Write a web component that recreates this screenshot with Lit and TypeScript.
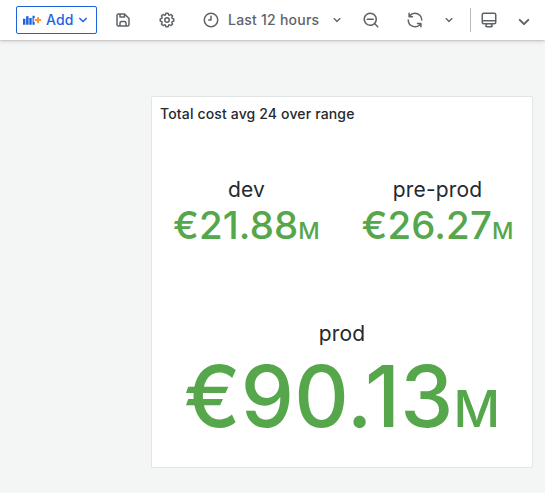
import { LitElement, html, css, svg } from "lit";
import { customElement, property } from "lit/decorators.js";

const ICONS: Record<string, string> = {
  save: "M20.71,9.29l-6-6a1,1,0,0,0-.32-.21A1.09,1.09,0,0,0,14,3H6A3,3,0,0,0,3,6V18a3,3,0,0,0,3,3H18a3,3,0,0,0,3-3V10A1,1,0,0,0,20.71,9.29ZM9,5h4V7H9Zm6,14H9V16a1,1,0,0,1,1-1h4a1,1,0,0,1,1,1Zm4-1a1,1,0,0,1-1,1H17V16a3,3,0,0,0-3-3H10a3,3,0,0,0-3,3v3H6a1,1,0,0,1-1-1V6A1,1,0,0,1,6,5H7V8A1,1,0,0,0,8,9h6a1,1,0,0,0,1-1V6.41l4,4Z",
  cog: "M21.32,9.55l-1.89-.63.89-1.78A1,1,0,0,0,20.13,6L18,3.87a1,1,0,0,0-1.15-.19l-1.78.89-.63-1.89A1,1,0,0,0,13.5,2h-3a1,1,0,0,0-.95.68L8.92,4.57,7.14,3.68A1,1,0,0,0,6,3.87L3.87,6a1,1,0,0,0-.19,1.15l.89,1.78-1.89.63A1,1,0,0,0,2,10.5v3a1,1,0,0,0,.68.95l1.89.63-.89,1.78A1,1,0,0,0,3.87,18L6,20.13a1,1,0,0,0,1.15.19l1.78-.89.63,1.89a1,1,0,0,0,.95.68h3a1,1,0,0,0,.95-.68l.63-1.89,1.78.89A1,1,0,0,0,18,20.13L20.13,18a1,1,0,0,0,.19-1.15l-.89-1.78,1.89-.63A1,1,0,0,0,22,13.5v-3A1,1,0,0,0,21.32,9.55ZM20,12.78l-1.2.4A2,2,0,0,0,17.64,16l.57,1.14-1.1,1.1L16,17.64a2,2,0,0,0-2.79,1.16l-.4,1.2H11.22l-.4-1.2A2,2,0,0,0,8,17.64l-1.14.57-1.1-1.1L6.36,16A2,2,0,0,0,5.2,13.18L4,12.78V11.22l1.2-.4A2,2,0,0,0,6.36,8L5.79,6.89l1.1-1.1L8,6.36A2,2,0,0,0,10.82,5.2l.4-1.2h1.56l.4,1.2A2,2,0,0,0,16,6.36l1.14-.57,1.1,1.1L17.64,8a2,2,0,0,0,1.16,2.79l1.2.4ZM12,8a4,4,0,1,0,4,4A4,4,0,0,0,12,8Zm0,6a2,2,0,1,1,2-2A2,2,0,0,1,12,14Z",
  clock: "M12,2A10,10,0,1,0,22,12,10,10,0,0,0,12,2Zm0,18a8,8,0,1,1,8-8A8,8,0,0,1,12,20ZM12,6a1,1,0,0,0-1,1v4H9a1,1,0,0,0,0,2h3a1,1,0,0,0,1-1V7A1,1,0,0,0,12,6Z",
  down: "M17,9.17a1,1,0,0,0-1.41,0L12,12.71,8.46,9.17a1,1,0,0,0-1.41,0,1,1,0,0,0,0,1.42l4.24,4.24a1,1,0,0,0,1.42,0L17,10.59A1,1,0,0,0,17,9.17Z",
  zoomOut: "M21.71,20.29,18,16.61A9,9,0,1,0,16.61,18l3.68,3.68a1,1,0,0,0,1.42,0A1,1,0,0,0,21.71,20.29ZM11,18a7,7,0,1,1,7-7A7,7,0,0,1,11,18Zm4-8H7a1,1,0,0,0,0,2h8a1,1,0,0,0,0-2Z",
  sync: "M19.91,15.51H15.38a1,1,0,0,0,0,2h2.4A8,8,0,0,1,4,12a1,1,0,1,0-2,0,10,10,0,0,0,16.88,7.23V21a1,1,0,0,0,2,0V16.5A1,1,0,0,0,19.91,15.51ZM12,2A10,10,0,0,0,5.12,4.77V3a1,1,0,0,0-2,0V7.5a1,1,0,0,0,1,1h4.5a1,1,0,0,0,0-2H6.22A8,8,0,0,1,20,12a1,1,0,0,0,2,0A10,10,0,0,0,12,2Z",
  monitor: "M19,2H5A3,3,0,0,0,2,5V15a3,3,0,0,0,3,3H7.64l-.58,1a2,2,0,0,0,0,2,2,2,0,0,0,1.75,1h6.46A2,2,0,0,0,17,21a2,2,0,0,0,0-2l-.59-1H19a3,3,0,0,0,3-3V5A3,3,0,0,0,19,2ZM8.77,20,10,18H14l1.2,2ZM20,15a1,1,0,0,1-1,1H5a1,1,0,0,1-1-1V14H20Zm0-3H4V5A1,1,0,0,1,5,4H19a1,1,0,0,1,1,1Z",
};

@customElement("ui-icon")
class UiIcon extends LitElement {
  @property() name = "";
  static styles = css`
    :host { display: block; flex: none; width: 18px; height: 18px; }
    svg { display: block; width: 100%; height: 100%; fill: currentColor; }
  `;
  render() {
    return html`<svg viewBox="0 0 24 24">${svg`<path d=${ICONS[this.name]}></path>`}</svg>`;
  }
}

@customElement("stat-value")
class StatValue extends LitElement {
  @property() label = "";
  @property() value = "";
  @property() unit = "";
  @property({ type: Boolean, reflect: true }) large = false;
  static styles = css`
    :host { display: flex; flex-direction: column; align-items: center; white-space: nowrap; }
    .label { font-size: 21px; line-height: 25px; color: #24292e; }
    .value { font-size: 38.4px; line-height: 46px; font-weight: 500; color: #56a64b; }
    .unit { font-size: 23.5px; }
    :host([large]) .value { font-size: 84.6px; line-height: 101px; }
    :host([large]) .unit { font-size: 51px; }
  `;
  render() {
    return html`<div class="label">${this.label}</div>
      <div class="value"><span>${this.value}</span><span class="unit">${this.unit}</span></div>`;
  }
}

@customElement("app-root")
class AppRoot extends LitElement {
  static styles = css`
    :host {
      display: flex; flex-direction: column; height: 493px; overflow: hidden;
      background: #f4f5f5; color: #24292e;
      font: 14px/22px Inter, "Liberation Sans", sans-serif; letter-spacing: 0.15px;
    }
    .bar {
      display: flex; align-items: center; height: 40px; flex: none; box-sizing: border-box;
      padding-left: 16px; background: #fff; color: #5f6368;
      box-shadow: 0 0.6px 1.5px rgba(0,0,0,.2), 0 1px 4px rgba(0,0,0,.18); font-weight: 500;
    }
    .add {
      display: flex; align-items: center; box-sizing: border-box; width: 81px; height: 28px;
      border: 1px solid #1f62e0; border-radius: 2px; padding-left: 6px; color: #1f62e0;
    }
    .add-glyph { width: 18px; height: 18px; margin-right: 5px; flex: none; }
    .save { margin-left: 17px; }
    .cog { margin-left: 26px; }
    .clock { margin-left: 26px; }
    .range { margin-left: 8px; width: 101px; white-space: nowrap; letter-spacing: 0.23px; }
    .small { width: 16px; height: 16px; }
    .zoom { margin-left: 17px; }
    .sync { margin-left: 26px; }
    .interval { margin-left: 17px; }
    .sep { width: 1px; height: 24px; background: #b9babc; margin-left: 13px; margin-right: 9px; }
    .big { width: 24px; height: 24px; margin: 3px 0 0 14px; }
    .panel {
      display: flex; flex-direction: column; box-sizing: border-box;
      width: 382px; height: 372px; margin: 56px 0 0 151px;
      background: #fff; border: 1px solid #e2e4e5; border-radius: 2px;
    }
    .title { padding: 6px 8px 0; font-weight: 500; }
    .stats { display: grid; grid-template-columns: 189px 189px; padding-top: 52px; column-gap: 2px; }
    .wide { grid-column: 1 / 3; margin-top: 67px; }
  `;
  render() {
    return html`
      <div class="bar">
        <div class="add">
          <svg class="add-glyph" viewBox="0 0 18 18">
            <path fill="#1f62e0" d="M0 7.700h2.400v6H0zM3.100 5.300h2.500v8.400H3.100zM6.300 7h2.400v6.700H6.300zM9.500 4.700h2.200v2.500h-1v3.800h1v2.700H9.500z"></path>
            <path fill="#ff9830" d="M14.100 5.900h1.900v2.200h2.200v1.900H16v2.300h-1.900V10h-2.400V8.100h2.400z"></path>
          </svg>
          <span>Add</span><ui-icon name="down"></ui-icon>
        </div>
        <ui-icon class="save" name="save"></ui-icon>
        <ui-icon class="cog" name="cog"></ui-icon>
        <ui-icon class="clock" name="clock"></ui-icon>
        <span class="range">Last 12 hours</span>
        <ui-icon class="small" name="down"></ui-icon>
        <ui-icon class="zoom" name="zoomOut"></ui-icon>
        <ui-icon class="sync" name="sync"></ui-icon>
        <ui-icon class="small interval" name="down"></ui-icon>
        <div class="sep"></div>
        <ui-icon name="monitor"></ui-icon>
        <ui-icon class="big" name="down"></ui-icon>
      </div>
      <section class="panel">
        <div class="title">Total cost avg 24 over range</div>
        <div class="stats">
          <stat-value label="dev" value="€21.88" unit="M"></stat-value>
          <stat-value label="pre-prod" value="€26.27" unit="M"></stat-value>
          <stat-value class="wide" large label="prod" value="€90.13" unit="M"></stat-value>
        </div>
      </section>`;
  }
}
